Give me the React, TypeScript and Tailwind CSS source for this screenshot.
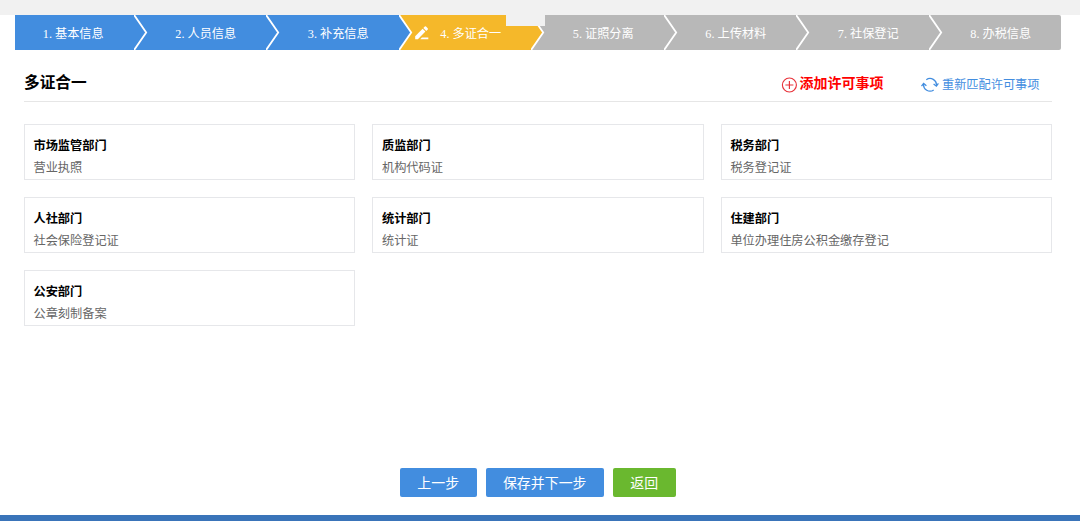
type StepState = 'done' | 'active' | 'todo';

const steps: { label: string; state: StepState }[] = [
  { label: '1. 基本信息', state: 'done' },
  { label: '2. 人员信息', state: 'done' },
  { label: '3. 补充信息', state: 'done' },
  { label: '4. 多证合一', state: 'active' },
  { label: '5. 证照分离', state: 'todo' },
  { label: '6. 上传材料', state: 'todo' },
  { label: '7. 社保登记', state: 'todo' },
  { label: '8. 办税信息', state: 'todo' },
];

const departments = [
  { name: '市场监管部门', item: '营业执照' },
  { name: '质监部门', item: '机构代码证' },
  { name: '税务部门', item: '税务登记证' },
  { name: '人社部门', item: '社会保险登记证' },
  { name: '统计部门', item: '统计证' },
  { name: '住建部门', item: '单位办理住房公积金缴存登记' },
  { name: '公安部门', item: '公章刻制备案' },
];

const stepBg = {
  done: 'bg-[#428ddf]',
  active: 'bg-[#f5b82a]',
  todo: 'bg-[#b8b8b8]',
};

const stepFill = {
  done: 'fill-[#428ddf]',
  active: 'fill-[#f5b82a]',
  todo: 'fill-[#b8b8b8]',
};

function PencilIcon() {
  return (
    <svg className="absolute left-[2px] top-[11px]" width="14" height="14" viewBox="0 0 14 14" fill="#fff">
      <path d="M0.2 13.3 V10.2 L7.6 2.8 L10.4 5.6 L2.9 13.3 Z" />
      <path d="M8.4 2 L9.8 0.6 Q10.4 0.1 11 0.6 L12.7 2.3 Q13.2 2.9 12.7 3.5 L11.3 4.9 Z" />
      <path d="M6.9 11.6 H13.3 V13.3 H5.2 Z" />
    </svg>
  );
}

function PlusIcon() {
  return (
    <svg width="16" height="16" viewBox="0 0 16 16" fill="none" stroke="#e8323a" strokeWidth="1.15">
      <circle cx="8.4" cy="8" r="7" />
      <path d="M8.4 4 V12 M4.4 8 H12.4" />
    </svg>
  );
}

function RefreshIcon() {
  return (
    <svg width="18" height="16" viewBox="0 0 18 16" fill="none" stroke="#428ddf" strokeWidth="1.25">
      <path d="M5.3 2.7 A6.4 6.4 0 0 1 15.4 8.6" />
      <path d="M12.6 6.9 L15.4 9.2 L17.4 6.4" />
      <path d="M12.7 12.9 A6.4 6.4 0 0 1 2.6 7" />
      <path d="M0.5 9.2 L2.6 6.5 L5.4 8.8" />
    </svg>
  );
}

function StepBar() {
  return (
    <div className="relative flex h-[35px] mx-[15px] w-[1046px] overflow-hidden rounded-r-[2px]">
      {steps.map((step, index) => {
        const next = steps[index + 1];
        return (
          <div key={step.label} className={`flex ${next ? 'w-[132.5px] shrink-0' : 'flex-1'}`}>
            <div
              className={`relative w-[118.5px] flex-1 pt-[2px] pr-[2px] text-center text-[12.2px] leading-[35px] text-white ${stepBg[step.state]}`}
            >
              {step.state === 'active' && <PencilIcon />}
              {step.label}
            </div>
            {next && (
              <svg
                className={`shrink-0 ${stepBg[next.state]}`}
                width="14"
                height="35"
                viewBox="0 0 14 35"
              >
                <path d="M-1 0 H0 L12.3 17.5 L0 35 H-1 Z" className={stepFill[step.state]} />
                <path d="M-0.2 -0.5 L12.2 17.5 L-0.2 35.5" fill="none" stroke="#fff" strokeWidth="1.8" />
              </svg>
            )}
          </div>
        );
      })}
      {/* 顶部下拉标签的残留遮挡 */}
      <div className="absolute left-[490.5px] top-0 w-[39.5px] h-[11px] bg-[#f1f1f1]" />
    </div>
  );
}

export default function App() {
  return (
    <div className="flex flex-col w-[1080px] h-[521px] bg-white overflow-hidden font-['Liberation_Serif','Noto_Sans_CJK_SC',serif]">
      <div className="h-[15px] shrink-0 bg-[#f1f1f1]" />
      <StepBar />

      <main className="flex-1 pl-6 pr-[28px]">
        <div className="flex items-center justify-between h-[52px] pt-[15px] border-b border-[#e6e6e6]">
          <h1 className="text-[15.7px] leading-6 font-bold text-black -mt-[1px]">多证合一</h1>
          <div className="flex items-center pr-[12.5px]">
            <button className="flex items-center gap-[2.5px] text-[14px] leading-6 font-bold text-[#f00]">
              <span className="pt-[3px]"><PlusIcon /></span>
              <span className="pt-[2px]">添加许可事项</span>
            </button>
            <button className="flex items-center gap-[3px] ml-[37.5px] pt-[2px] text-[12.2px] leading-6 text-[#428ddf]">
              <span className="pt-[1px]"><RefreshIcon /></span>
              <span className="pt-[1px]">重新匹配许可事项</span>
            </button>
          </div>
        </div>

        <div className="grid grid-cols-3 gap-x-[17.4px] gap-y-[17px] mt-[22px]">
          {departments.map(dept => (
            <div key={dept.name} className="h-14 border border-[#e6e7ea] pt-[10px] pl-[8.5px] text-[12.2px] leading-[22px]">
              <div className="font-bold text-black">{dept.name}</div>
              <div className="text-[#666]">{dept.item}</div>
            </div>
          ))}
        </div>
      </main>

      <div className="flex justify-center gap-[9px] pr-[4.5px] pb-[18px] text-[13.95px] leading-[29px] text-white">
        <button className="w-[76.5px] h-[29px] pt-[1px] rounded-[2px] bg-[#428ddf]">上一步</button>
        <button className="w-[118.5px] h-[29px] pt-[1px] rounded-[2px] bg-[#428ddf]">保存并下一步</button>
        <button className="w-[62.5px] h-[29px] pt-[1px] rounded-[2px] bg-[#6ab82f]">返回</button>
      </div>
      <div className="h-[6px] shrink-0 bg-[#3a74b9]" />
    </div>
  );
}
